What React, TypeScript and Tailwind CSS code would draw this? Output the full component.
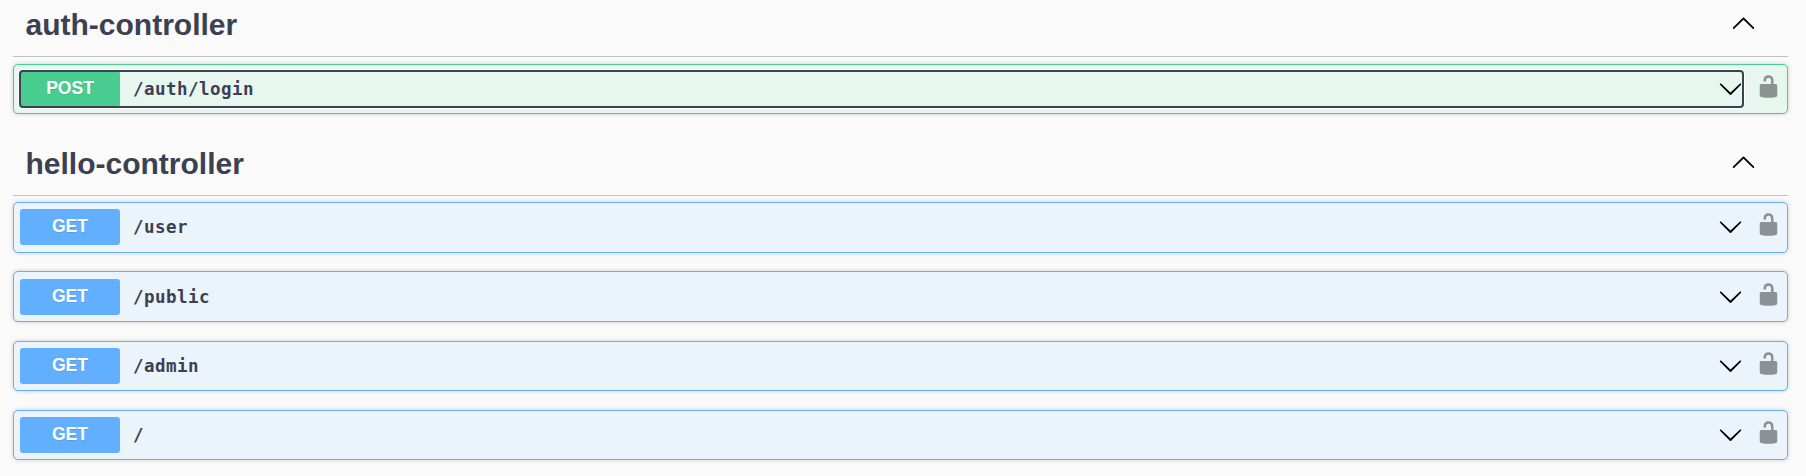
type Operation = { method: 'GET' | 'POST'; path: string; box: string; bar: string; lock: string; focused?: boolean };

const authOps: Operation[] = [
  { method: 'POST', path: '/auth/login', box: 'h-[50px]', bar: 'mt-1.5', lock: 'mt-[9px]', focused: true },
];

const helloOps: Operation[] = [
  { method: 'GET', path: '/user', box: 'h-[51px] mb-[18px]', bar: 'mt-1.5', lock: 'mt-[9px]' },
  { method: 'GET', path: '/public', box: 'h-[51px] mb-[19px]', bar: 'mt-[7px]', lock: 'mt-[10px]' },
  { method: 'GET', path: '/admin', box: 'h-[50px] mb-[19px]', bar: 'mt-1.5', lock: 'mt-[9px]' },
  { method: 'GET', path: '/', box: 'h-[50px]', bar: 'mt-1.5', lock: 'mt-[9px]' },
];

function ArrowUp() {
  return (
    <svg viewBox="0 0 20 20" className="mt-2.5 mr-8 size-[25px] shrink-0">
      <path d="M 17.418 14.908 C 17.69 15.176 18.127 15.176 18.397 14.908 C 18.667 14.64 18.668 14.207 18.397 13.939 L 10.489 6.109 C 10.219 5.841 9.782 5.841 9.51 6.109 L 1.602 13.939 C 1.332 14.207 1.332 14.64 1.602 14.908 C 1.873 15.176 2.311 15.176 2.581 14.908 L 10 7.767 L 17.418 14.908 Z" />
    </svg>
  );
}

function ArrowDown() {
  return (
    <svg viewBox="0 0 20 20" className="mt-[5px] size-[25px] shrink-0">
      <path d="M17.418 6.109c.272-.268.709-.268.979 0s.271.701 0 .969l-7.908 7.83c-.27.268-.707.268-.979 0l-7.908-7.83c-.27-.268-.271-.701 0-.969.271-.268.709-.268.979 0L10 13.25l7.418-7.141z" />
    </svg>
  );
}

function Unlocked({ className }: { className: string }) {
  return (
    <svg viewBox="0 0 20 20" className={`${className} ml-[13px] mr-[6px] size-[25px] shrink-0 opacity-40`}>
      <path d="M15.8 8H14V5.6C14 2.703 12.665 1 10 1 7.334 1 6 2.703 6 5.6V6h2v-.801C8 3.754 8.797 3 10 3c1.203 0 2 .754 2 2.199V8H4c-.553 0-1 .646-1 1.199V17c0 .549.428 1.139.951 1.307l1.197.387C5.672 18.861 6.55 19 7.1 19h5.8c.549 0 1.428-.139 1.951-.307l1.196-.387c.524-.167.953-.757.953-1.306V9.199C17 8.646 16.352 8 15.8 8z" />
    </svg>
  );
}

function OperationRow({ op }: { op: Operation }) {
  const post = op.method === 'POST';
  return (
    <div
      className={`${op.box} flex items-start rounded-[5px] border pl-1.5 shadow-[0_0_4px_rgba(0,0,0,0.19)] ${
        post ? 'border-[#49cc90] bg-[#e8f6f0]' : 'border-[#61affe] bg-[#ebf3fb]'
      }`}
    >
      <button
        className={`${op.bar} flex h-9 grow items-start rounded-[3px] text-left ${
          op.focused ? 'shadow-[0_0_0_2px_#fff] outline-2 -outline-offset-1 outline-[#3b4151]' : ''
        }`}
      >
        <span
          className={`h-9 w-[100px] rounded-[3px] text-center text-[17.5px] leading-[35px] font-bold text-white [text-shadow:0_1px_0_rgba(0,0,0,0.1)] ${
            post ? 'bg-[#49cc90]' : 'bg-[#61affe]'
          }`}
        >
          {op.method}
        </span>
        <span className="ml-[13px] grow font-['DejaVu_Sans_Mono',monospace] text-[17.5px] leading-[37px] font-bold tracking-[0.46px] text-[#3b4151]">
          {op.path}
        </span>
        <ArrowDown />
      </button>
      <Unlocked className={op.lock} />
    </div>
  );
}

function Section({ name, head, ops }: { name: string; head: string; ops: Operation[] }) {
  return (
    <section>
      <div className={`${head} flex items-start border-b border-[#c0c1c4] pl-[12.5px]`}>
        <h3 className="grow text-[30px] leading-[50px] font-bold text-[#3b4151]">{name}</h3>
        <ArrowUp />
      </div>
      {ops.map((op) => (
        <OperationRow key={op.path} op={op} />
      ))}
    </section>
  );
}

export default function App() {
  return (
    <main className="h-[476px] overflow-hidden bg-[#fafafa] pr-[18px] pl-[13px] font-['Liberation_Sans',Arial,sans-serif]">
      <Section name="auth-controller" head="h-[57px] mb-[7px]" ops={authOps} />
      <div className="h-[25px]" />
      <Section name="hello-controller" head="h-[57px] mb-1.5" ops={helloOps} />
    </main>
  );
}
